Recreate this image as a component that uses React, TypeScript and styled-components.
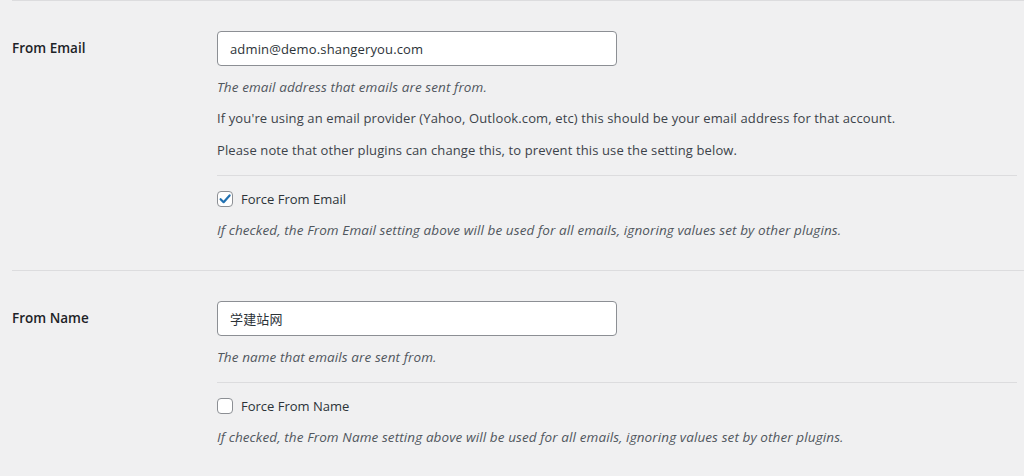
import { useState } from 'react'
import styled, { createGlobalStyle } from 'styled-components'

const GlobalStyle = createGlobalStyle`
    html, body {
        margin: 0;
        padding: 0;
        background: #f0f0f1;
    }
    body {
        font-family: 'Open Sans', 'Noto Sans CJK SC', sans-serif;
        font-size: 13px;
        color: #3c434a;
    }
`

const Page = styled.div`
    padding-left: 12px;
    height: 476px;
    overflow: hidden;
`

const Row = styled.section`
    display: grid;
    grid-template-columns: 205px 800px;
    border-top: 1px solid #dcdcde;
    padding: 30px 0 29px;
`

const Label = styled.label`
    font-weight: 600;
    font-size: 13.5px;
    color: #1d2327;
    line-height: 35px;
`

const Field = styled.div`
    display: flex;
    flex-direction: column;
`

const TextInput = styled.input`
    box-sizing: border-box;
    width: 400px;
    height: 35px;
    padding: 0 12px;
    border: 1px solid #8c8f94;
    border-radius: 4px;
    background: #fff;
    color: #2c3338;
    font-family: 'Open Sans', 'Noto Sans CJK SC', sans-serif;
    font-size: 13px;
    letter-spacing: 0.15px;
    outline: none;
`

const Text = styled.p<{ $italic?: boolean }>`
    margin: 10.5px 0 0;
    line-height: 21px;
    font-style: ${(p) => (p.$italic ? 'italic' : 'normal')};
    font-size: ${(p) => (p.$italic ? '13.5px' : '13px')};
    letter-spacing: ${(p) => (p.$italic ? '0.1px' : '0.12px')};
    color: ${(p) => (p.$italic ? '#50575e' : '#3c434a')};
`

const Divider = styled.hr`
    margin: 14px 0 0;
    border: 0;
    border-top: 1px solid #dcdcde;
`

const CheckRow = styled.label`
    display: flex;
    align-items: center;
    gap: 8px;
    margin-top: 13px;
    line-height: 21px;
    color: #2c3338;
    cursor: pointer;
`

const Box = styled.span`
    box-sizing: border-box;
    display: inline-flex;
    align-items: center;
    justify-content: center;
    width: 16px;
    height: 16px;
    border: 1px solid #8c8f94;
    border-radius: 4px;
    background: #fff;
`

const Check = ({ checked, label, onToggle }: any) => (
    <CheckRow onClick={onToggle}>
        <Box>
            {checked && (
                <svg width="14" height="14" viewBox="0 0 14 14">
                    <path
                        d="M2.6 7.2 L5.6 10.2 L11.6 3.4"
                        fill="none"
                        stroke="#2271b1"
                        strokeWidth="2.2"
                        strokeLinecap="round"
                        strokeLinejoin="round"
                    />
                </svg>
            )}
        </Box>
        {label}
    </CheckRow>
)

const App = () => {
    const [state, setState] = useState({
        email: 'admin@demo.shangeryou.com',
        name: '学建站网',
        forceEmail: true,
        forceName: false,
    })

    return (
        <Page>
            <GlobalStyle />
            <Row>
                <Label>From Email</Label>
                <Field>
                    <TextInput
                        type="text"
                        value={state.email}
                        onChange={(e) => setState({ ...state, email: e.target.value })}
                    />
                    <Text $italic>The email address that emails are sent from.</Text>
                    <Text>
                        If you're using an email provider (Yahoo, Outlook.com, etc) this should be your email address for that account.
                    </Text>
                    <Text>Please note that other plugins can change this, to prevent this use the setting below.</Text>
                    <Divider />
                    <Check
                        checked={state.forceEmail}
                        label="Force From Email"
                        onToggle={() => setState({ ...state, forceEmail: !state.forceEmail })}
                    />
                    <Text $italic>
                        If checked, the From Email setting above will be used for all emails, ignoring values set by other plugins.
                    </Text>
                </Field>
            </Row>
            <Row>
                <Label>From Name</Label>
                <Field>
                    <TextInput
                        type="text"
                        value={state.name}
                        onChange={(e) => setState({ ...state, name: e.target.value })}
                    />
                    <Text $italic>The name that emails are sent from.</Text>
                    <Divider />
                    <Check
                        checked={state.forceName}
                        label="Force From Name"
                        onToggle={() => setState({ ...state, forceName: !state.forceName })}
                    />
                    <Text $italic>
                        If checked, the From Name setting above will be used for all emails, ignoring values set by other plugins.
                    </Text>
                </Field>
            </Row>
        </Page>
    )
}

export default App
